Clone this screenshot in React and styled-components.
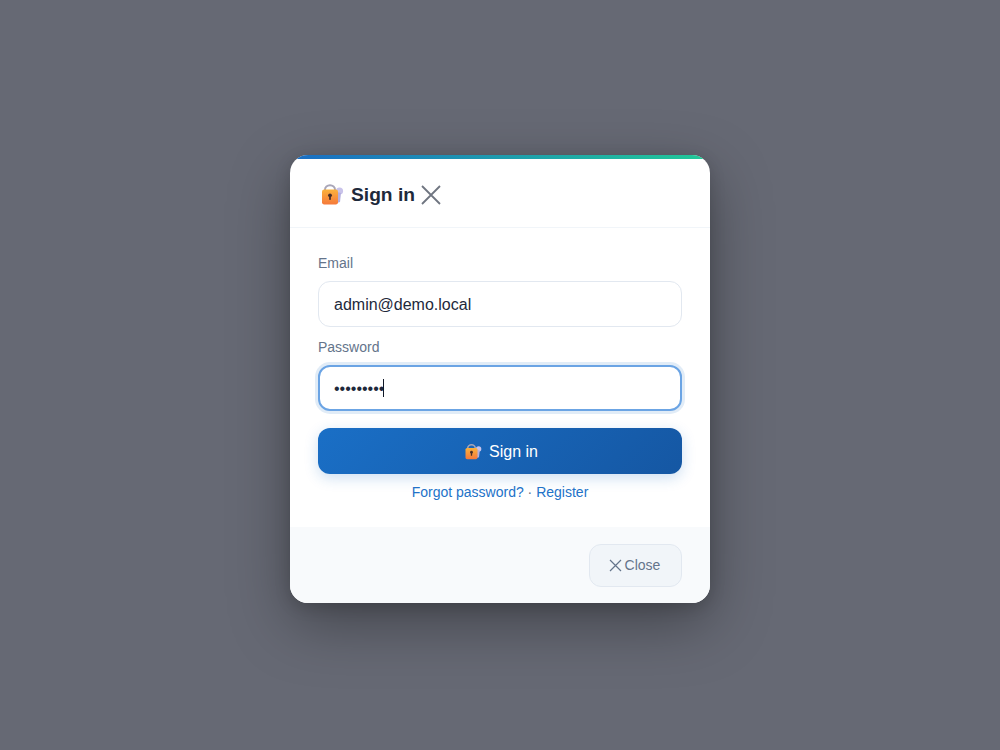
import React from "react";
import styled, { createGlobalStyle } from "styled-components";

const Global = createGlobalStyle`
  * { box-sizing: border-box; }
  html, body { margin: 0; padding: 0; height: 100%; }
  body { font-family: "Liberation Sans", Arial, sans-serif; background: #666974; }
`;

const Overlay = styled.div`
  width: 1000px;
  height: 750px;
  padding-top: 8px;
  display: flex;
  align-items: center;
  justify-content: center;
  background: #666974;
`;

const Modal = styled.div`
  position: relative;
  width: 420px;
  height: 448px;
  display: flex;
  flex-direction: column;
  background: #fff;
  border-radius: 18px;
  overflow: hidden;
  box-shadow: 0 20px 60px rgba(0, 0, 0, 0.35), 0 4px 16px rgba(0, 0, 0, 0.15);
  &::before {
    content: "";
    position: absolute;
    inset: 0 0 auto 0;
    height: 4px;
    background: linear-gradient(90deg, #1a6dc4, #22c997);
  }
`;

const Header = styled.header`
  height: 73px;
  padding: 8px 30px 0;
  display: flex;
  align-items: center;
  border-bottom: 1px solid #f1f5f9;
`;

const Title = styled.h2`
  margin: 0;
  display: flex;
  align-items: center;
  gap: 7px;
  font-size: 19.2px;
  font-weight: 700;
  color: #1e293b;
`;

const HeaderX = styled.svg`
  width: 20px;
  height: 20px;
  margin-left: 6px;
  stroke: #6f7580;
  stroke-width: 1.8;
  fill: none;
`;

const Body = styled.div`
  flex: 1;
  padding: 28px 28px 0;
  display: flex;
  flex-direction: column;
`;

const Label = styled.label`
  display: block;
  font-size: 14px;
  line-height: 14px;
  color: #64748b;
  margin-bottom: 11px;
`;

const Field = styled.div`
  position: relative;
  margin-bottom: 13px;
`;

const Input = styled.input`
  display: block;
  width: 100%;
  height: 46px;
  padding: 1px 15px 0;
  font: 16px "Liberation Sans", Arial, sans-serif;
  color: #1e293b;
  caret-color: transparent;
  background: #fff;
  border: 1px solid #e2e8f0;
  border-radius: 12px;
  outline: none;
  &:focus {
    border: 2px solid #6ba4e4;
    padding: 1px 14px 0;
    box-shadow: 0 0 0 3px rgba(26, 109, 196, 0.13);
  }
`;

const Caret = styled.span`
  position: absolute;
  left: 65px;
  top: 14px;
  width: 1px;
  height: 18px;
  background: #111827;
`;

const Submit = styled.button`
  display: flex;
  align-items: center;
  justify-content: center;
  gap: 7px;
  width: 100%;
  height: 46px;
  margin-top: 4px;
  padding: 1px 0 0 2px;
  border: none;
  border-radius: 12px;
  font: 16px "Liberation Sans", Arial, sans-serif;
  color: #fff;
  background: linear-gradient(135deg, #1a6fc6, #1557a3);
  box-shadow: 0 4px 14px rgba(26, 109, 196, 0.22);
`;

const Links = styled.div`
  margin-top: 10px;
  text-align: center;
  font-size: 14px;
  line-height: 16px;
  color: #64748b;
`;

const Link = styled.a`
  color: #2272c8;
  text-decoration: none;
`;

const Footer = styled.footer`
  height: 76px;
  padding: 17px 28px 0;
  display: flex;
  justify-content: flex-end;
  align-items: flex-start;
  background: #f8fafc;
`;

const CloseButton = styled.button`
  display: flex;
  align-items: center;
  justify-content: center;
  gap: 3px;
  width: 93px;
  height: 43px;
  padding: 0 2px 2px 0;
  border: 1px solid #e2e8f0;
  border-radius: 12px;
  background: #f1f5f9;
  color: #64748b;
  font: 14px "Liberation Sans", Arial, sans-serif;
`;

const CloseX = styled.svg`
  width: 13px;
  height: 13px;
  margin-top: 1px;
  stroke: #64748b;
  stroke-width: 1.2;
  fill: none;
`;

function LockKey({ size }) {
  return (
    <svg width={size} height={size} viewBox="0 0 24 24" aria-hidden="true">
      <defs>
        <linearGradient id="lockBody" x1="0" y1="0" x2="0" y2="1">
          <stop offset="0" stopColor="#fbb23c" />
          <stop offset="1" stopColor="#f5793b" />
        </linearGradient>
      </defs>
      <circle cx="19.5" cy="8" r="3.6" fill="#c9c3ea" />
      <path d="M17 9 L21 10 L20 19 L17 20 Z" fill="#b4aedd" />
      <path d="M5 8 V6.8 a5 4.5 0 0 1 10 0 V8" fill="none" stroke="#a9a6b8" strokeWidth="2" />
      <rect x="2" y="6.5" width="16" height="15" rx="2.2" fill="url(#lockBody)" />
      <circle cx="10" cy="12.3" r="1.9" fill="#4a2f2a" />
      <rect x="9.1" y="12.5" width="1.8" height="4.6" rx=".8" fill="#4a2f2a" />
    </svg>
  );
}

export default function App() {
  return (
    <Overlay>
      <Global />
      <Modal>
        <Header>
          <Title>
            <LockKey size={24} />
            Sign in
          </Title>
          <HeaderX viewBox="0 0 20 20"><path d="M1 1 L19 19 M19 1 L1 19" /></HeaderX>
        </Header>
        <Body>
          <Label>Email</Label>
          <Field>
            <Input type="text" defaultValue="admin@demo.local" />
          </Field>
          <Label>Password</Label>
          <Field>
            <Input type="password" defaultValue="secret123" autoFocus />
            <Caret />
          </Field>
          <Submit>
            <LockKey size={18} />
            Sign in
          </Submit>
          <Links>
            <Link href="#">Forgot password?</Link> · <Link href="#">Register</Link>
          </Links>
        </Body>
        <Footer>
          <CloseButton>
            <CloseX viewBox="0 0 13 13"><path d="M1 1 L12 12 M12 1 L1 12" /></CloseX>
            Close
          </CloseButton>
        </Footer>
      </Modal>
    </Overlay>
  );
}
